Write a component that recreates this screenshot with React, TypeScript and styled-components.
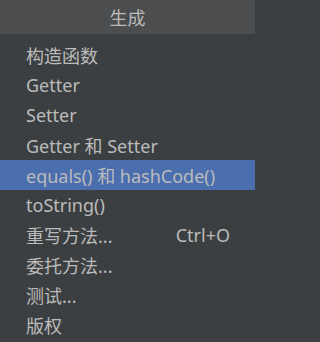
import { createGlobalStyle, styled } from "styled-components";

const GlobalStyle = createGlobalStyle`
  html, body {
    margin: 0;
    padding: 0;
    background: #3c3f41;
  }
  body {
    font-family: "Noto Sans", "Noto Sans CJK SC", sans-serif;
  }
`;

const Menu = styled.div`
  width: 255px;
  height: 342px;
  background: #3c3f41;
  display: flex;
  flex-direction: column;
  overflow: hidden;
`;

const Title = styled.div`
  height: 34px;
  background: #4b4d4f;
  color: #bbbbbb;
  font-size: 18px;
  display: flex;
  align-items: center;
  justify-content: center;
`;

const List = styled.ul`
  list-style: none;
  margin: 0;
  padding: 6px 0 0;
`;

const Item = styled.li<{ $active?: boolean }>`
  height: 30px;
  display: flex;
  align-items: center;
  justify-content: space-between;
  padding: 0 25px 0 26px;
  font-size: 18px;
  color: #bbbbbb;
  background: ${(p) => (p.$active ? "#4b6eaf" : "transparent")};
  white-space: nowrap;
`;

const Shortcut = styled.span`
  color: #bbbbbb;
`;

interface Entry {
  label: string;
  shortcut?: string;
}

const entries: Entry[] = [
  { label: "构造函数" },
  { label: "Getter" },
  { label: "Setter" },
  { label: "Getter 和 Setter" },
  { label: "equals() 和 hashCode()" },
  { label: "toString()" },
  { label: "重写方法...", shortcut: "Ctrl+O" },
  { label: "委托方法..." },
  { label: "测试..." },
  { label: "版权" },
];

function App() {
  return (
    <>
      <GlobalStyle />
      <Menu>
        <Title>生成</Title>
        <List>
          {entries.map((item, index) => (
            <Item key={index} $active={index === 4}>
              <span>{item.label}</span>
              {item.shortcut && <Shortcut>{item.shortcut}</Shortcut>}
            </Item>
          ))}
        </List>
      </Menu>
    </>
  );
}

export default App;
